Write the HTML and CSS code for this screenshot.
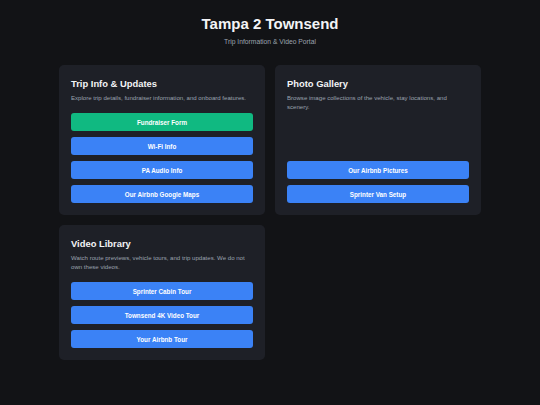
FILE: index.html
```html
<!DOCTYPE html>
<html lang="en">
<head>
<meta charset="utf-8">
<title>Tampa 2 Townsend</title>
<link rel="stylesheet" href="styles.css">
</head>
<body>
<div class="page">
  <header class="header">
    <h1 class="title">Tampa 2 Townsend</h1>
    <p class="subtitle">Trip Information &amp; Video Portal</p>
  </header>
  <main class="grid">
    <section class="card">
      <h2 class="card-title">Trip Info &amp; Updates</h2>
      <p class="card-desc">Explore trip details, fundraiser information, and onboard features.</p>
      <div class="buttons">
        <a class="btn btn-green">Fundraiser Form</a>
        <a class="btn">Wi-Fi Info</a>
        <a class="btn">PA Audio Info</a>
        <a class="btn">Our Airbnb Google Maps</a>
      </div>
    </section>
    <section class="card">
      <h2 class="card-title">Photo Gallery</h2>
      <p class="card-desc">Browse image collections of the vehicle, stay locations, and scenery.</p>
      <div class="buttons">
        <a class="btn">Our Airbnb Pictures</a>
        <a class="btn">Sprinter Van Setup</a>
      </div>
    </section>
    <section class="card">
      <h2 class="card-title">Video Library</h2>
      <p class="card-desc">Watch route previews, vehicle tours, and trip updates. We do not own these videos.</p>
      <div class="buttons">
        <a class="btn">Sprinter Cabin Tour</a>
        <a class="btn">Townsend 4K Video Tour</a>
        <a class="btn">Your Airbnb Tour</a>
      </div>
    </section>
  </main>
</div>
</body>
</html>
```
FILE: styles.css
```css
html, body {
  margin: 0;
  padding: 0;
  background: #121316;
  font-family: "Liberation Sans", Arial, sans-serif;
  color: #f3f4f6;
}
.page {
  width: 422px;
  margin: 0 auto;
  padding-top: 15px;
}
.header {
  text-align: center;
}
.title {
  margin: 0;
  font-size: 15px;
  line-height: 18px;
  font-weight: 700;
  color: #f3f4f6;
}
.subtitle {
  margin: 4px 0 0;
  font-size: 6.75px;
  line-height: 9px;
  color: #9ca3af;
}
.grid {
  margin-top: 19px;
  display: grid;
  grid-template-columns: 1fr 1fr;
  gap: 10px;
}
.card {
  background: #1e2027;
  border-radius: 5px;
  padding: 12px;
  display: flex;
  flex-direction: column;
}
.card-title {
  margin: 0;
  font-size: 9.4px;
  line-height: 14px;
  font-weight: 700;
  color: #f3f4f6;
}
.card-desc {
  margin: 2px 0 0;
  font-size: 6.08px;
  line-height: 9px;
  color: #9ca3af;
}
.buttons {
  margin-top: auto;
  padding-top: 11px;
  display: flex;
  flex-direction: column;
  gap: 6px;
}
.btn {
  display: flex;
  align-items: center;
  justify-content: center;
  height: 18px;
  border-radius: 3px;
  background: #3b82f6;
  color: #ffffff;
  font-size: 6.3px;
  font-weight: 700;
  text-decoration: none;
}
.btn-green {
  background: #10b981;
}
```
